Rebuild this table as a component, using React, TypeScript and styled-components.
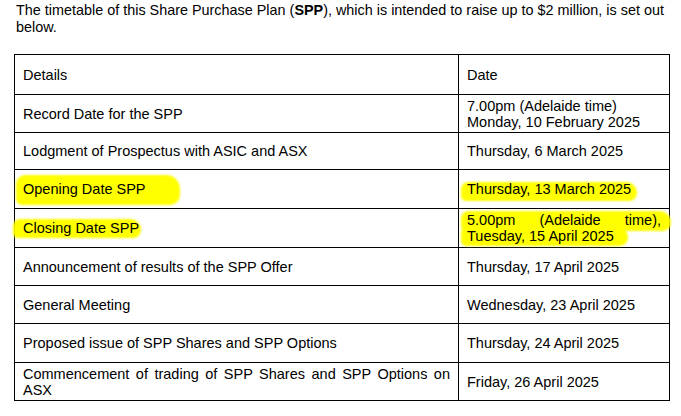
import React from "react";
import styled, { createGlobalStyle } from "styled-components";

const Global = createGlobalStyle`
  html, body { margin: 0; padding: 0; background: #fff; }
  body { font-family: "Liberation Sans", Arial, sans-serif; color: #000; }
`;

const Page = styled.div`
  width: 681px;
  height: 416px;
  padding: 2px 10px 0 14px;
  box-sizing: border-box;
  overflow: hidden;
`;

const Intro = styled.p`
  margin: 0 0 0 2px;
  font-size: 14.4px;
  line-height: 17px;
  width: 660px;
`;

const Strong = styled.strong`
  font-weight: 700;
`;

const Table = styled.table`
  margin-top: 18px;
  border-collapse: collapse;
  width: 655px;
  table-layout: fixed;
  font-size: 14.5px;
  line-height: 16px;
`;

const Cell = styled.td<{ $h?: number; $justify?: boolean }>`
  position: relative;
  border: 1px solid #000;
  padding: 0 8px;
  height: ${(p) => p.$h ?? 38}px;
  box-sizing: border-box;
  vertical-align: middle;
  text-align: ${(p) => (p.$justify ? "justify" : "left")};
`;

const Label = styled.span`
  position: relative;
  z-index: 1;
`;

const Mark = styled.span<{ $l: number; $t: number; $w: number; $hh: number }>`
  position: absolute;
  left: ${(p) => p.$l}px;
  top: ${(p) => p.$t}px;
  width: ${(p) => p.$w}px;
  height: ${(p) => p.$hh}px;
  background: #ffff00;
  border-radius: 9px 14px 10px 6px;
  filter: blur(0.8px);
  z-index: 0;
`;

type M = [number, number, number, number];

type Row = {
  d: string;
  date: React.ReactNode;
  h: number;
  dMarks?: M[];
  tMarks?: M[];
  justify?: boolean;
  dJustify?: boolean;
};

const rows: Row[] = [
  { d: "Record Date for the SPP", date: <>7.00pm (Adelaide time)<br />Monday, 10 February 2025</>, h: 38 },
  { d: "Lodgment of Prospectus with ASIC and ASX", date: "Thursday, 6 March 2025", h: 37 },
  {
    d: "Opening Date SPP",
    date: "Thursday, 13 March 2025",
    h: 39,
    dMarks: [[1, 5, 164, 30]],
    tMarks: [[2, 12, 176, 19]],
  },
  {
    d: "Closing Date SPP",
    date: "5.00pm (Adelaide time), Tuesday, 15 April 2025",
    h: 39,
    dMarks: [[-2, 10, 128, 19]],
    tMarks: [[2, 2, 210, 20], [2, 17, 167, 20]],
    dJustify: true,
  },
  { d: "Announcement of results of the SPP Offer", date: "Thursday, 17 April 2025", h: 38 },
  { d: "General Meeting", date: "Wednesday, 23 April 2025", h: 38 },
  { d: "Proposed issue of SPP Shares and SPP Options", date: "Thursday, 24 April 2025", h: 39 },
  { d: "Commencement of trading of SPP Shares and SPP Options on ASX", date: "Friday, 26 April 2025", h: 38, justify: true },
];

export default function App() {
  return (
    <>
      <Global />
      <Page>
        <Intro>
          The timetable of this Share Purchase Plan (<Strong>SPP</Strong>), which is intended to raise up to $2 million, is set out below.
        </Intro>
        <Table>
          <colgroup>
            <col style={{ width: 444 }} />
            <col style={{ width: 211 }} />
          </colgroup>
          <tbody>
            <tr>
              <Cell $h={40}>Details</Cell>
              <Cell $h={40}>Date</Cell>
            </tr>
            {rows.map((r, i) => (
              <tr key={i}>
                <Cell $h={r.h} $justify={r.justify}>
                  {r.dMarks?.map((m, j) => <Mark key={j} $l={m[0]} $t={m[1]} $w={m[2]} $hh={m[3]} />)}
                  <Label>{r.d}</Label>
                </Cell>
                <Cell $h={r.h} $justify={r.dJustify}>
                  {r.tMarks?.map((m, j) => <Mark key={j} $l={m[0]} $t={m[1]} $w={m[2]} $hh={m[3]} />)}
                  <Label>{r.date}</Label>
                </Cell>
              </tr>
            ))}
          </tbody>
        </Table>
      </Page>
    </>
  );
}
